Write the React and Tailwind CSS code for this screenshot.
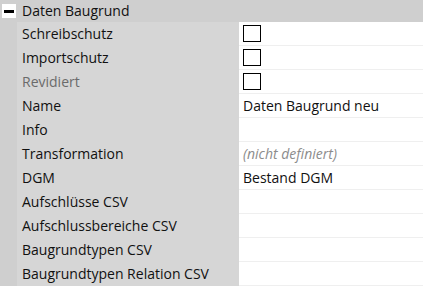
import React from 'react';

const rows = [
  { label: 'Schreibschutz', kind: 'check' },
  { label: 'Importschutz', kind: 'check' },
  { label: 'Revidiert', kind: 'check', muted: true },
  { label: 'Name', value: 'Daten Baugrund neu' },
  { label: 'Info' },
  { label: 'Transformation', value: '(nicht definiert)', placeholder: true },
  { label: 'DGM', value: 'Bestand DGM' },
  { label: 'Aufschlüsse CSV' },
  { label: 'Aufschlussbereiche CSV' },
  { label: 'Baugrundtypen CSV' },
  { label: 'Baugrundtypen Relation CSV' },
];

function Row({ label, kind, value, muted, placeholder }) {
  return (
    <div className="flex h-6">
      <div
        className={`w-[222px] bg-[#d6d6d6] pl-[5px] flex items-center ${muted ? 'text-[#6b6b6b]' : 'text-[#111]'}`}
      >
        {label}
      </div>
      <div className="flex-1 bg-white border-b border-[#efefef] flex items-center pl-1">
        {kind === 'check' && <div className="w-[18px] h-[17px] border-[1.5px] border-black" />}
        {value && (
          <span className={placeholder ? 'italic text-[#8c8c8c]' : 'text-[#111]'}>{value}</span>
        )}
      </div>
    </div>
  );
}

export default function App() {
  return (
    <div
      className="w-[423px] h-[286px] overflow-hidden bg-[#cfcfcf] text-[14px] leading-none"
      style={{ fontFamily: '"Open Sans", "Noto Sans", sans-serif' }}
    >
      {/* group header */}
      <div className="flex items-center h-[22px]">
        <div className="ml-[2px] w-[14px] h-[14px] bg-white flex items-center justify-center">
          <div className="w-[10px] h-[3px] bg-black" />
        </div>
        <span className="ml-[6px] text-[#111]">Daten Baugrund</span>
      </div>
      <div className="pl-[17px]">
        {rows.map((r) => (
          <Row key={r.label} {...r} />
        ))}
      </div>
    </div>
  );
}
